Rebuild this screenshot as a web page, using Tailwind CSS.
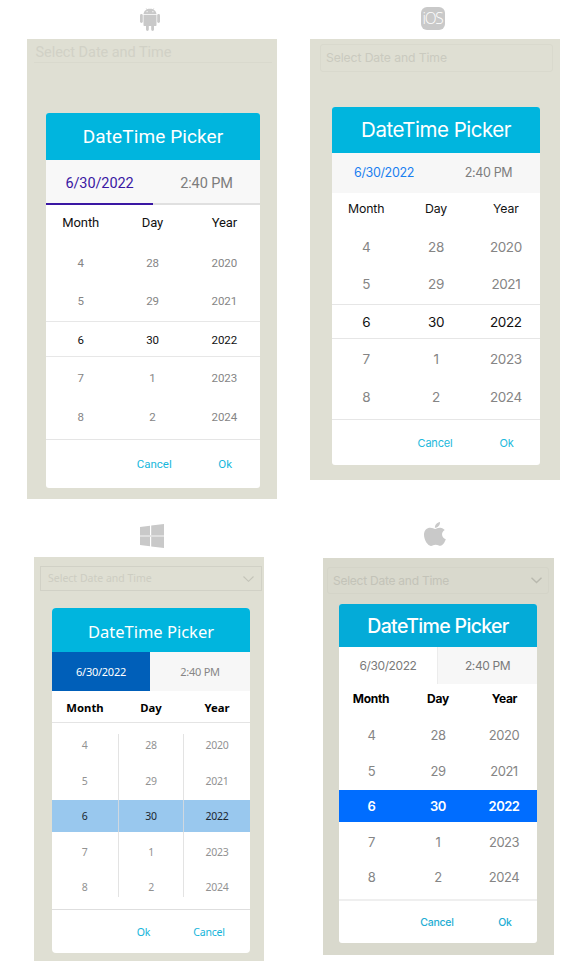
<!DOCTYPE html>
<html lang="en">
<head>
<meta charset="utf-8">
<title>DateTime Picker</title>
<script src="https://cdn.jsdelivr.net/npm/@tailwindcss/browser@4"></script>
</head>
<body class="bg-white">
<main class="flex h-[976px] w-[588px] overflow-hidden bg-white whitespace-nowrap">

  <div class="flex w-[294px] flex-col">
    <!-- Android -->
    <div class="flex h-[39px] pt-[8px] pl-[140px]">
      <svg class="h-[23px] w-[20px]" viewBox="0 0 20 23" fill="#c9c9c9"><path d="M3.500 6C3.800 3.600 5.200 2.200 6.600 1.500L5.700.2 6 0l1 1.300c1.800-.6 4.200-.6 6 0L14 0l.3.2-.9 1.300c1.400.7 2.800 2.100 3.100 4.500zM7.100 3.100a.6.6 0 1 0 0 1.200.6.6 0 0 0 0-1.200zm5.800 0a.6.6 0 1 0 0 1.200.6.6 0 0 0 0-1.200z" fill-rule="evenodd"/><path d="M3.500 6.800h13v10.100a1.200 1.200 0 0 1-1.200 1.200H14v3.500a1.400 1.400 0 0 1-2.800 0v-3.500H8.800v3.500a1.400 1.400 0 0 1-2.800 0v-3.500H4.700a1.200 1.200 0 0 1-1.200-1.200z"/><rect y="6" width="2.800" height="9" rx="1.400"/><rect x="17.200" y="6" width="2.800" height="9" rx="1.400"/></svg>
    </div>
    <section class="ml-[27px] flex h-[460px] w-[250px] flex-col bg-[#dfdfd3] font-['Roboto',sans-serif]">
      <div class="ml-[7px] h-[24px] w-[238px] border-b border-[#d9d9cd] pl-[1.500px] text-[14.500px] leading-[27px] tracking-[-.05px] text-[#d1d1c6]">Select Date and Time</div>
      <div class="mt-[50px] ml-[19px] flex h-[375px] w-[214px] flex-col overflow-hidden rounded-[3px] bg-white">
        <div class="h-[47px] bg-[#00b5de] text-center text-[19px] leading-[48px] tracking-[.1px] text-white">DateTime Picker</div>
        <div class="flex h-[45px] bg-[#f8f8f8] text-center text-[14.500px] leading-[47px] tracking-[-.1px]">
          <div class="w-[107px] border-b-2 border-[#3a17a3] text-[#3a17a3]">6/30/2022</div>
          <div class="w-[107px] border-b-2 border-[#e0e0e0] text-[#7d7d7d]">2:40 PM</div>
        </div>
        <div class="grid h-[39px] grid-cols-3 text-center text-[13px] leading-[35px] tracking-[-.1px] text-[#111]"><span class="-ml-[2px]">Month</span><span class="-ml-[1px]">Day</span><span>Year</span></div>
        <div class="relative grid h-[192px] grid-cols-3 grid-rows-5 text-center text-[11.500px] leading-[39px] tracking-[-.1px] text-[#858585]">
          <span class="-ml-[2px]">4</span><span class="-ml-[1px]">28</span><span>2020</span>
          <span class="-ml-[2px]">5</span><span class="-ml-[1px]">29</span><span>2021</span>
          <span class="-ml-[2px] text-[#111]">6</span><span class="-ml-[1px] text-[#111]">30</span><span class="text-[#111]">2022</span>
          <span class="-ml-[2px]">7</span><span class="-ml-[1px]">1</span><span>2023</span>
          <span class="-ml-[2px]">8</span><span class="-ml-[1px]">2</span><span>2024</span>
          <div class="absolute inset-x-0 top-[77px] h-[36px] border-y border-[#e7e7e7]"></div>
        </div>
        <div class="mt-[3px] flex h-[49px] border-t border-[#e5e5e5] text-center text-[11.500px] leading-[49px] text-[#16b7dc]"><span class="ml-[73px] w-[72px]">Cancel</span><span class="ml-[1px] w-[71px]">Ok</span></div>
      </div>
    </section>

    <!-- Windows -->
    <div class="flex h-[58px] pt-[25px] pl-[140px]">
      <svg class="h-[24px] w-[24px]" viewBox="0 0 24 24"><path fill="#e6e6e6" d="M0 11h24v2H0z"/><path fill="#c9c9c9" d="M0 2.900 10 1.700V11.200H0zM11.200 1.500 24 0V11.200H11.200zM0 12.700H10V22.300L0 21.100zM11.200 12.700H24V24L11.200 22.500z"/></svg>
    </div>
    <section class="ml-[34px] flex h-[404px] w-[230px] flex-col bg-[#dfdfd3] font-['Noto_Sans',sans-serif]">
      <div class="mt-[9px] ml-[6px] flex h-[25px] w-[222px] items-center justify-between border border-[#d1d1c6] pr-[7px] pl-[7px] text-[10.500px] text-[#cdcdc2]">Select Date and Time
        <svg class="h-[6px] w-[11px]" viewBox="0 0 11 6" fill="none" stroke="#c4c4b9" stroke-width="1.100"><path d="M.5.5l5 4.800 5-4.800"/></svg>
      </div>
      <div class="mt-[17px] ml-[18px] flex h-[345px] w-[198px] flex-col overflow-hidden rounded-[4px] bg-white">
        <div class="h-[44px] bg-[#00b5de] text-center text-[16.500px] leading-[47px] text-white">DateTime Picker</div>
        <div class="flex h-[39px] text-center text-[11px] leading-[40px] tracking-[-.25px]">
          <div class="w-[98px] bg-[#005fb9] text-white">6/30/2022</div>
          <div class="w-[100px] bg-[#f7f7f7] text-[#868686]">2:40 PM</div>
        </div>
        <div class="grid h-[32px] grid-cols-3 border-b border-[#e4e4e4] text-center text-[11.300px] leading-[34px] font-bold text-black"><span>Month</span><span>Day</span><span>Year</span></div>
        <div class="relative mt-[5px] grid h-[178px] grid-cols-3 grid-rows-5 text-center text-[10.500px] leading-[35px] tracking-[-.3px] text-[#929292]">
          <div class="absolute inset-x-0 top-[72px] h-[32px] bg-[#99c8ee]"></div>
          <div class="absolute top-[6px] left-[66px] h-[163px] w-[66px] border-x border-[#dcdcdc]/80"></div>
          <span class="-ml-[1px]">4</span><span>28</span><span>2020</span>
          <span class="-ml-[1px]">5</span><span>29</span><span>2021</span>
          <span class="relative -ml-[1px] text-[#1b2730]">6</span><span class="relative text-[#1b2730]">30</span><span class="relative text-[#1b2730]">2022</span>
          <span class="-ml-[1px]">7</span><span>1</span><span>2023</span>
          <span class="-ml-[1px]">8</span><span>2</span><span>2024</span>
        </div>
        <div class="mt-[3px] flex h-[44px] border-t border-[#dedede] text-center text-[10.500px] leading-[45px] tracking-[-.2px] text-[#12b4da]"><span class="ml-[59px] w-[65px]">Ok</span><span class="w-[66px]">Cancel</span></div>
      </div>
    </section>
  </div>

  <div class="flex w-[294px] flex-col">
    <!-- iOS -->
    <div class="flex h-[39px] pt-[7px] pl-[127px]">
      <div class="h-[23px] w-[24px] rounded-[6px] bg-[#c9c9c9] text-center font-['Open_Sans',sans-serif] text-[15.500px] leading-[22px] font-light tracking-[-1.200px] text-white"><span class="-ml-[1px]">iOS</span></div>
    </div>
    <section class="ml-[16px] flex h-[441px] w-[250px] flex-col bg-[#dfdfd3] font-['Inter',sans-serif]">
      <div class="mt-[5px] ml-[10px] h-[28px] w-[233px] rounded-[3px] border border-[#d9d9cd] pl-[5px] text-[12.200px] leading-[26px] tracking-[-.1px] text-[#cacabf]">Select Date and Time</div>
      <div class="mt-[35px] ml-[22px] flex h-[358px] w-[208px] flex-col overflow-hidden rounded-[3px] bg-white">
        <div class="h-[46px] bg-[#00b5de] text-center text-[20.500px] leading-[46px] tracking-[-.5px] text-white">DateTime Picker</div>
        <div class="flex h-[40px] bg-[#f7f7f7] text-center text-[12.500px] leading-[40px] tracking-[-.35px]">
          <div class="w-[104px] text-[#1a7ff0]">6/30/2022</div>
          <div class="ml-[1px] w-[103px] text-[#7d7d7d]">2:40 PM</div>
        </div>
        <div class="grid h-[36px] grid-cols-3 text-center text-[12.300px] leading-[31px] tracking-[-.15px] text-[#111]"><span class="-ml-[1px]">Month</span><span>Day</span><span class="-mr-[1px]">Year</span></div>
        <div class="relative grid h-[187px] grid-cols-3 grid-rows-5 text-center text-[13.500px] leading-[37px] tracking-[-.4px] text-[#858585]">
          <span class="-ml-[1px]">4</span><span>28</span><span class="-mr-[1px]">2020</span>
          <span class="-ml-[1px]">5</span><span>29</span><span class="-mr-[1px]">2021</span>
          <span class="-ml-[1px] text-[#111]">6</span><span class="text-[#111]">30</span><span class="-mr-[1px] text-[#111]">2022</span>
          <span class="-ml-[1px]">7</span><span>1</span><span class="-mr-[1px]">2023</span>
          <span class="-ml-[1px]">8</span><span>2</span><span class="-mr-[1px]">2024</span>
          <div class="absolute inset-x-0 top-[75px] h-[35px] border-y border-[#e6e6e6]"></div>
        </div>
        <div class="mt-[3px] flex h-[46px] border-t border-[#e6e6e6] text-center text-[11px] leading-[47px] tracking-[-.2px] text-[#22b9dc]"><span class="ml-[68px] w-[70px]">Cancel</span><span class="ml-[3px] w-[67px]">Ok</span></div>
      </div>
    </section>

    <!-- macOS -->
    <div class="flex h-[78px] pt-[42px] pl-[130px]">
      <svg class="h-[24px] w-[22px]" viewBox="0 0 22 24" fill="#c9c9c9"><path d="M16 0c.2 3.200-2.300 5.900-5.100 5.800C10.600 3 13.200.3 16 0z"/><path d="M11.200 6.900c1.200 0 2.500-1.300 5-1.200 1.900.1 3.500 1 4.500 2.400-4 2.500-3.300 7.600 1.100 9.100-.9 2.500-2.900 6.400-5.300 6.600-1.800.1-2.500-1.100-4.800-1.100s-3 1.200-4.800 1.200C4.200 24 0 18.500 0 12.800 0 8.300 3 5.700 6.200 5.700c2.200 0 3.900 1.200 5 1.200z"/></svg>
    </div>
    <section class="ml-[29px] flex h-[397px] w-[231px] flex-col bg-[#d9d9cd] font-['Inter',sans-serif]">
      <div class="mt-[9px] ml-[4px] flex h-[27px] w-[222px] items-center justify-between rounded-[3px] border border-[#d4d4c8] pr-[6px] pl-[5px] text-[12px] tracking-[-.25px] text-[#c3c3b8]">Select Date and Time
        <svg class="h-[7px] w-[11px]" viewBox="0 0 11 7" fill="none" stroke="#b9b9ae" stroke-width="1.400"><path d="M.5.8l5 4.800 5-4.800"/></svg>
      </div>
      <div class="mt-[10px] ml-[16px] flex h-[339px] w-[198px] flex-col overflow-hidden rounded-[3px] bg-white">
        <div class="h-[43px] bg-[#04abd8] text-center text-[19.500px] leading-[44px] font-medium tracking-[-.65px] text-white">DateTime Picker</div>
        <div class="flex h-[37px] text-center text-[12px] leading-[37px] tracking-[-.4px] text-[#7a7a7a]">
          <div class="w-[98px]">6/30/2022</div>
          <div class="w-[100px] border-l border-[#ececec] bg-[#f7f7f7]">2:40 PM</div>
        </div>
        <div class="grid h-[33px] grid-cols-3 text-center text-[12px] leading-[29px] font-bold tracking-[-.3px] text-black"><span class="-ml-[2px]">Month</span><span>Day</span><span class="-mr-[1px]">Year</span></div>
        <div class="relative grid h-[178px] grid-cols-3 grid-rows-5 text-center text-[13px] leading-[36px] tracking-[-.5px] text-[#858585]">
          <div class="absolute inset-x-0 top-[73px] h-[32px] bg-[#006dff]"></div>
          <span class="-ml-[1px]">4</span><span>28</span><span>2020</span>
          <span class="-ml-[1px]">5</span><span>29</span><span>2021</span>
          <span class="relative -ml-[1px] font-semibold text-white">6</span><span class="relative font-semibold text-white">30</span><span class="relative font-semibold text-white">2022</span>
          <span class="-ml-[1px]">7</span><span>1</span><span>2023</span>
          <span class="-ml-[1px]">8</span><span>2</span><span>2024</span>
        </div>
        <div class="mt-[4px] flex h-[44px] border-t-2 border-[#efefef] text-center text-[10.500px] leading-[43px] font-medium tracking-[-.25px] text-[#22add3]"><span class="ml-[65px] w-[66px]">Cancel</span><span class="ml-[3px] w-[64px]">Ok</span></div>
      </div>
    </section>
  </div>
</main>
</body>
</html>
